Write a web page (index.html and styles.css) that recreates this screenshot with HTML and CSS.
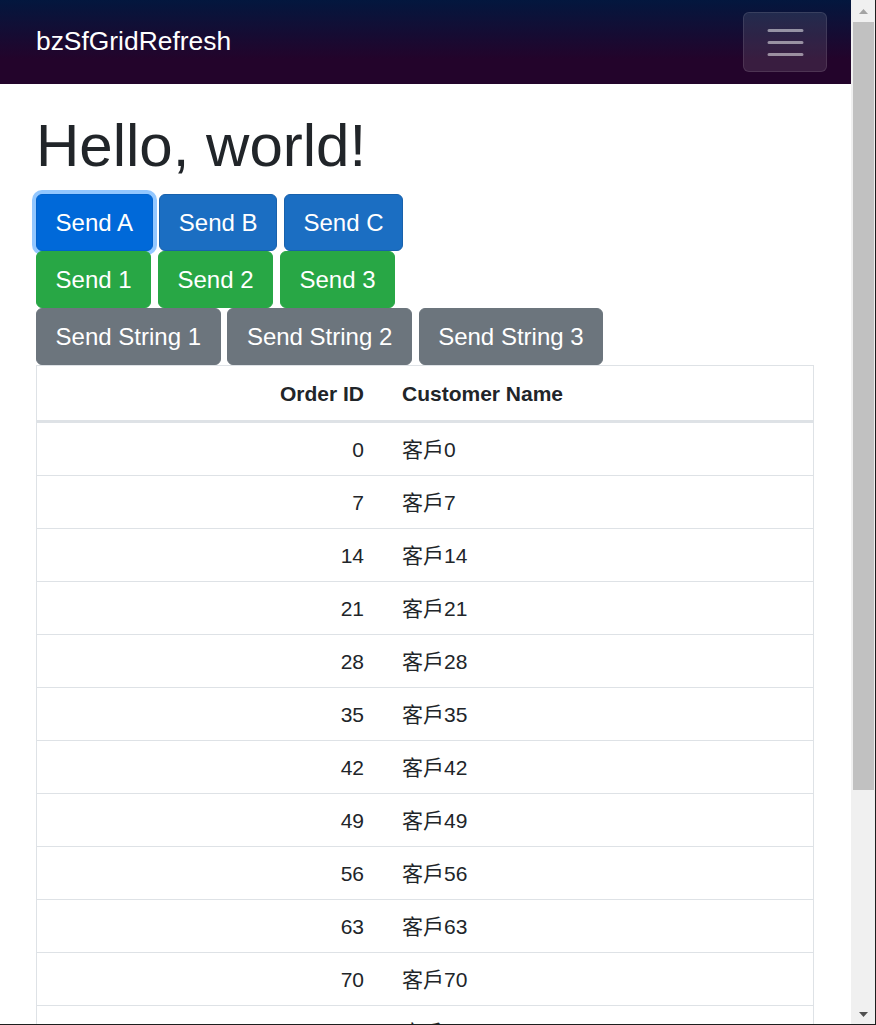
FILE: index.html
```html
<!DOCTYPE html>
<html lang="zh-Hant">
<head>
<meta charset="utf-8">
<title>bzSfGridRefresh</title>
<link rel="stylesheet" href="styles.css">
</head>
<body>
<div class="page">
  <header class="top-row">
    <a class="brand" href="#">bzSfGridRefresh</a>
    <button class="toggler" type="button" aria-label="Navigation menu">
      <svg class="toggler-icon" viewBox="0 0 30 30" width="45" height="45">
        <path d="M4 7h22M4 15h22M4 23h22" stroke="rgba(255,255,255,0.5)" stroke-width="2" stroke-linecap="round" fill="none"/>
      </svg>
    </button>
  </header>
  <main class="content">
    <h1 class="title">Hello, world!</h1>
    <div class="btn-row">
      <button class="btn btn-primary is-focused">Send A</button>
      <button class="btn btn-primary">Send B</button>
      <button class="btn btn-primary">Send C</button>
    </div>
    <div class="btn-row">
      <button class="btn btn-success">Send 1</button>
      <button class="btn btn-success">Send 2</button>
      <button class="btn btn-success">Send 3</button>
    </div>
    <div class="btn-row">
      <button class="btn btn-secondary">Send String 1</button>
      <button class="btn btn-secondary">Send String 2</button>
      <button class="btn btn-secondary">Send String 3</button>
    </div>
    <div class="grid">
      <table class="grid-table">
        <colgroup><col class="col-id"><col class="col-name"></colgroup>
        <thead>
          <tr><th class="num">Order ID</th><th>Customer Name</th></tr>
        </thead>
        <tbody>
          <tr><td class="num">0</td><td>客戶0</td></tr>
          <tr><td class="num">7</td><td>客戶7</td></tr>
          <tr><td class="num">14</td><td>客戶14</td></tr>
          <tr><td class="num">21</td><td>客戶21</td></tr>
          <tr><td class="num">28</td><td>客戶28</td></tr>
          <tr><td class="num">35</td><td>客戶35</td></tr>
          <tr><td class="num">42</td><td>客戶42</td></tr>
          <tr><td class="num">49</td><td>客戶49</td></tr>
          <tr><td class="num">56</td><td>客戶56</td></tr>
          <tr><td class="num">63</td><td>客戶63</td></tr>
          <tr><td class="num">70</td><td>客戶70</td></tr>
          <tr><td class="num">77</td><td>客戶77</td></tr>
          <tr><td class="num">84</td><td>客戶84</td></tr>
          <tr><td class="num">91</td><td>客戶91</td></tr>
          <tr><td class="num">98</td><td>客戶98</td></tr>
          <tr><td class="num">105</td><td>客戶105</td></tr>
        </tbody>
      </table>
    </div>
  </main>
</div>
<div class="scrollbar" aria-hidden="true">
  <div class="sb-arrow sb-up">
    <svg width="9" height="5" viewBox="0 0 9 5"><polygon points="0,5 9,5 4.5,0" fill="#a3a3a3"/></svg>
  </div>
  <div class="sb-track"><div class="sb-thumb"></div></div>
  <div class="sb-arrow sb-down">
    <svg width="9" height="5" viewBox="0 0 9 5"><polygon points="0,0 9,0 4.5,5" fill="#505050"/></svg>
  </div>
</div>
<div class="window-frame" aria-hidden="true"></div>
</body>
</html>
```

FILE: styles.css
```css
body {
  margin: 0;
  font-family: "Liberation Sans", "Noto Sans CJK TC", Arial, sans-serif;
  font-size: 24px;
  line-height: 1.5;
  color: #212529;
  background: #fff;
}

.page {
  margin-right: 25px;
}

/* browser chrome: vertical scrollbar drawn over the right edge */
.scrollbar {
  position: fixed;
  top: 0;
  right: 0;
  bottom: 0;
  width: 25px;
  box-sizing: border-box;
  display: flex;
  flex-direction: column;
  background: #f0f0f0;
  border-right: 1px solid #1e1e1e;
}

.sb-arrow {
  height: 22px;
  flex: none;
  display: flex;
  align-items: center;
  justify-content: center;
}

.sb-arrow svg {
  display: block;
}

.sb-track {
  flex: 1;
  padding: 0 1px 0 2px;
}

.sb-thumb {
  height: 768px;
  background: #c1c1c1;
}

.window-frame {
  position: fixed;
  left: 0;
  right: 0;
  bottom: 0;
  height: 1px;
  background: #1e1e1e;
  pointer-events: none;
}

.top-row {
  height: 84px;
  box-sizing: border-box;
  display: flex;
  align-items: center;
  justify-content: space-between;
  padding: 0 24px 0 36px;
  background-image: linear-gradient(180deg, rgb(3, 23, 62) 0%, rgb(35, 4, 43) 70%);
}

.brand {
  font-size: 26.4px;
  line-height: 1.117;
  color: #fff;
  text-decoration: none;
  white-space: nowrap;
}

.toggler {
  display: flex;
  align-items: center;
  justify-content: center;
  box-sizing: border-box;
  width: 84px;
  height: 60px;
  padding: 0;
  background-color: rgba(255, 255, 255, 0.1);
  border: 1px solid rgba(255, 255, 255, 0.1);
  border-radius: 6px;
}

.toggler-icon {
  display: block;
}

.content {
  padding: 26.4px 36px 32px 36px;
}

.title {
  margin: 0 0 12px 0;
  font-size: 60px;
  font-weight: 500;
  line-height: 72px;
  color: #212529;
}

.btn-row {
  display: flex;
  column-gap: 6.67px;
}

.btn {
  box-sizing: border-box;
  height: 57px;
  padding: 0 18.6px;
  font-family: inherit;
  font-size: 24px;
  line-height: 36px;
  color: #fff;
  border: 1px solid transparent;
  border-radius: 6px;
  white-space: nowrap;
}

.btn-primary {
  background-color: #1b6ec2;
  border-color: #1861ac;
}

.btn-primary.is-focused {
  background-color: #0069d9;
  border-color: #0062cc;
  box-shadow: 0 0 0 4px rgba(38, 143, 255, 0.5);
}

.btn-success {
  background-color: #28a745;
  border-color: #28a745;
}

.btn-secondary {
  background-color: #6c757d;
  border-color: #6c757d;
}

.grid {
  border: 1px solid #dee2e6;
  margin-right: 1px;
}

.grid-table {
  width: 100%;
  border-collapse: collapse;
  table-layout: fixed;
  font-size: 21px;
}

.col-id {
  width: 346px;
}

.grid-table th,
.grid-table td {
  padding: 0 19px;
  text-align: left;
  vertical-align: middle;
  white-space: nowrap;
}

.grid-table th {
  height: 54px;
  font-weight: 700;
  border-bottom: 3px solid #dee2e6;
}

.grid-table td {
  height: 52px;
  border-bottom: 1px solid #dee2e6;
}

.grid-table .num {
  text-align: right;
}
```
